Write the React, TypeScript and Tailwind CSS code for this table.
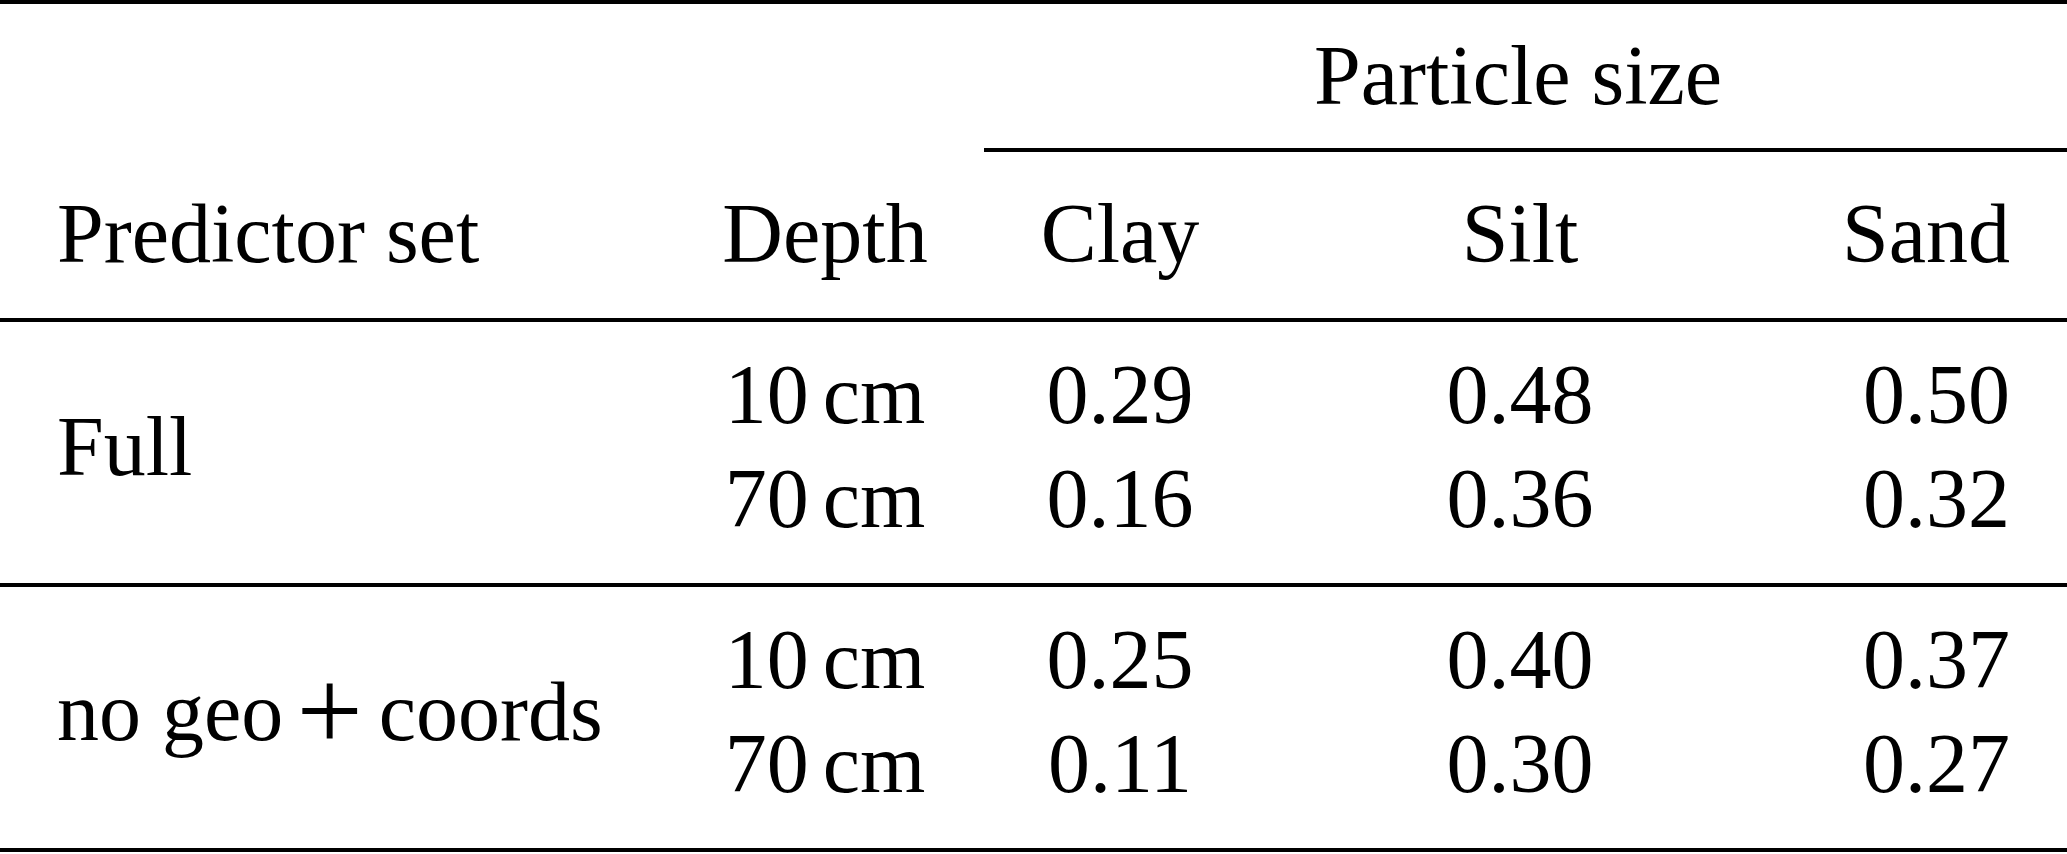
import React from 'react';

const cols = 'grid grid-cols-[720px_210px_380px_420px_337px]';

const groups = [
  {
    name: 'Full',
    rows: [
      { depth: '10', clay: '0.29', silt: '0.48', sand: '0.50' },
      { depth: '70', clay: '0.16', silt: '0.36', sand: '0.32' },
    ],
  },
  {
    name: 'no geo + coords',
    rows: [
      { depth: '10', clay: '0.25', silt: '0.40', sand: '0.37' },
      { depth: '70', clay: '0.11', silt: '0.30', sand: '0.27' },
    ],
  },
];

const Rule = () => <div className="h-1 w-full bg-black" />;

const Depth = ({ v }: { v: string }) => (
  <span>
    {v}
    <span className="ml-[14px]">cm</span>
  </span>
);

const GroupName = ({ name }: { name: string }) => {
  if (name !== 'no geo + coords') return <>{name}</>;
  return (
    <>
      <span>no geo</span>
      <span className="ml-[23px] mr-[25px] inline-block scale-[1.4]">+</span>
      <span>coords</span>
    </>
  );
};

export default function App() {
  return (
    <div className="w-[2067px] bg-white text-black font-['Liberation_Serif','Times_New_Roman',serif] text-[84px] leading-[84px]">
      {/* Top rule */}
      <Rule />

      {/* Spanning header */}
      <div className="pt-[30px] pl-[1314px] whitespace-nowrap">Particle size</div>
      <div className="mt-[30px] ml-[984px] h-1 bg-black" />

      {/* Column heads */}
      <div className={`${cols} mt-[40px] whitespace-nowrap`}>
        <div className="pl-[57px]">Predictor set</div>
        <div className="text-center">Depth</div>
        <div className="text-center">Clay</div>
        <div className="text-center">Silt</div>
        <div className="text-right pr-[57px]">Sand</div>
      </div>
      <div className="mt-[42px]">
        <Rule />
      </div>

      {groups.map((g) => (
        <div key={g.name}>
          <div className={`${cols} grid-rows-[84px_84px] gap-y-[20px] pt-[31px] pb-[42px] whitespace-nowrap`}>
            <div className="row-span-2 self-center pl-[57px]">
              <GroupName name={g.name} />
            </div>
            {g.rows.map((r) => (
              <React.Fragment key={r.depth}>
                <div className="col-start-2 text-center">
                  <Depth v={r.depth} />
                </div>
                <div className="text-center">{r.clay}</div>
                <div className="text-center">{r.silt}</div>
                <div className="text-right pr-[57px]">{r.sand}</div>
              </React.Fragment>
            ))}
          </div>
          <Rule />
        </div>
      ))}
    </div>
  );
}
